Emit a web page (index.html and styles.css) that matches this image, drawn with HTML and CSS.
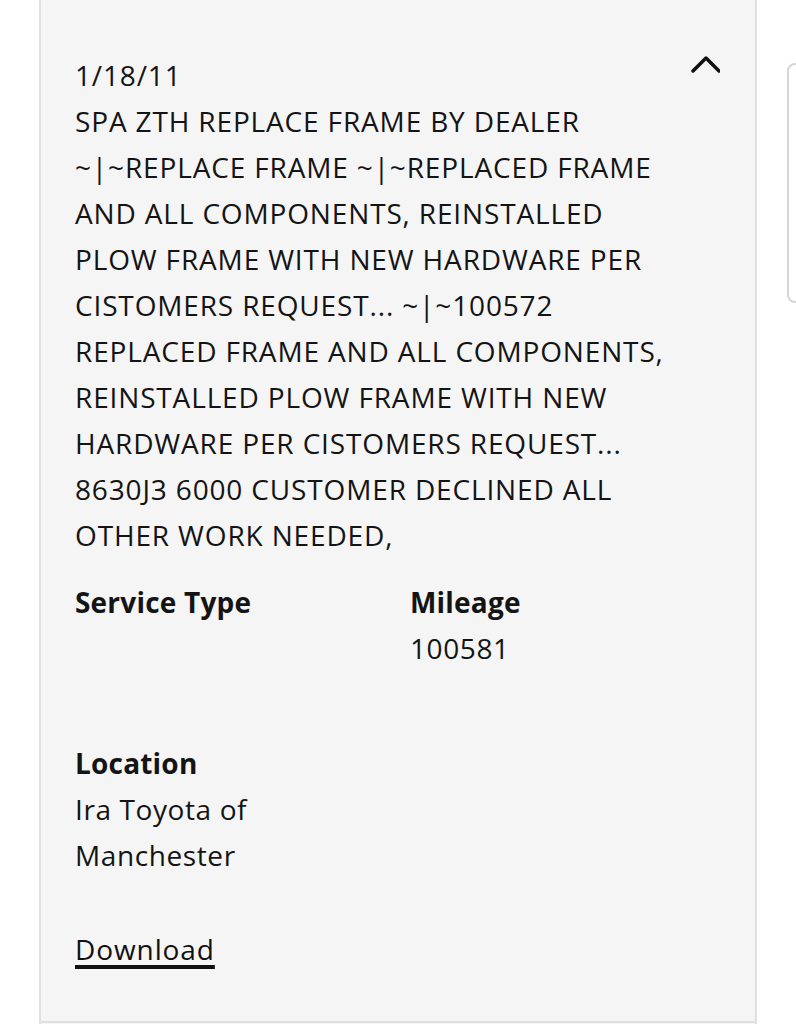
FILE: index.html
```html
<!DOCTYPE html>
<html lang="en">
<head>
    <meta charset="UTF-8">
    <meta name="viewport" content="width=device-width, initial-scale=1.0">
    <title>Service History</title>
    <link rel="stylesheet" href="styles.css">
</head>
<body>
<div class="page">
    <div class="record">
        <div class="record-head">
            <div class="record-text">
                1/18/11<br>
                SPA ZTH REPLACE FRAME BY DEALER<br>
                ~|~REPLACE FRAME ~|~REPLACED FRAME<br>
                AND ALL COMPONENTS, REINSTALLED<br>
                PLOW FRAME WITH NEW HARDWARE PER<br>
                CISTOMERS REQUEST... ~|~100572<br>
                REPLACED FRAME AND ALL COMPONENTS,<br>
                REINSTALLED PLOW FRAME WITH NEW<br>
                HARDWARE PER CISTOMERS REQUEST...<br>
                8630J3 6000 CUSTOMER DECLINED ALL<br>
                OTHER WORK NEEDED,
            </div>
            <button class="toggle" aria-label="Collapse">
                <svg width="32" height="20" viewBox="0 0 32 20">
                    <path d="M5 15 L18 2 L31 15" fill="none" stroke="#111" stroke-width="3.5" stroke-linecap="round" stroke-linejoin="round"/>
                </svg>
            </button>
        </div>
        <div class="details">
            <div class="detail">
                <div class="label">Service Type</div>
                <div class="value"></div>
            </div>
            <div class="detail">
                <div class="label">Mileage</div>
                <div class="value">100581</div>
            </div>
            <div class="detail">
                <div class="label">Location</div>
                <div class="value">Ira Toyota of<br>Manchester</div>
            </div>
        </div>
        <a class="download" href="#">Download</a>
    </div>
    <div class="record next"></div>
</div>
<div class="side-tab"></div>
</body>
</html>
```

FILE: styles.css
```css
body {
    margin: 0;
    background-color: #fff;
    font-family: "Open Sans", Arial, sans-serif;
    color: #141414;
    overflow: hidden;
}
.page {
    width: 718px;
    margin-left: 39px;
}
.record {
    background-color: #f5f5f5;
    border-left: 2px solid #e0e0e0;
    border-right: 2px solid #e0e0e0;
    padding: 52px 35px 49px 34px;
}
.record.next {
    border-top: 2px solid #e0e0e0;
    padding: 0;
    height: 40px;
}
.record-head {
    display: flex;
    justify-content: space-between;
    align-items: flex-start;
}
.record-text {
    font-size: 28px;
    line-height: 46px;
    letter-spacing: 0.85px;
}
.toggle {
    background: none;
    border: none;
    padding: 0;
    margin-top: 4px;
    cursor: pointer;
}
.details {
    display: grid;
    grid-template-columns: 1fr 1fr;
    column-gap: 25px;
    row-gap: 69px;
    margin-top: 21px;
}
.label {
    font-size: 28px;
    font-weight: 700;
    line-height: 46px;
    letter-spacing: 0.2px;
}
.value {
    font-size: 28px;
    line-height: 46px;
    min-height: 46px;
    letter-spacing: 0.6px;
}
.download {
    display: inline-block;
    margin-top: 48px;
    font-size: 28px;
    line-height: 46px;
    letter-spacing: 0.9px;
    color: #111;
    text-decoration: underline;
    text-decoration-thickness: 4px;
    text-underline-offset: 5px;
}
.side-tab {
    position: absolute;
    top: 63px;
    left: 787px;
    width: 30px;
    height: 240px;
    border: 2px solid #d6d6d6;
    border-radius: 8px;
    box-sizing: border-box;
}
```
